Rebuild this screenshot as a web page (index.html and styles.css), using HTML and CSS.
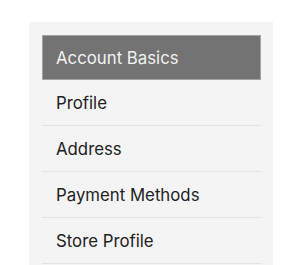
FILE: index.html
```html
<!DOCTYPE html>
<html lang="en">
<head>
  <meta charset="UTF-8" />
  <title>Account</title>
  <link rel="stylesheet" href="styles.css">
</head>
<body>
  <div class="sidebar">
    <nav class="menu">
      <div class="menu-title">Account Basics</div>
      <a class="menu-item" href="#">Profile</a>
      <a class="menu-item" href="#">Address</a>
      <a class="menu-item" href="#">Payment Methods</a>
      <a class="menu-item" href="#">Store Profile</a>
    </nav>
  </div>
</body>
</html>
```

FILE: styles.css
```css
body,
html {
  margin: 0;
  padding: 0;
  background: #fff;
  font-family: Inter, "Liberation Sans", sans-serif;
}

.sidebar {
  margin: 22px 0 0 29px;
  width: 244px;
  height: 243px;
  background: #f4f4f4;
  padding: 13px 12px 0 13px;
  box-sizing: border-box;
}

.menu {
  display: flex;
  flex-direction: column;
}

.menu-title {
  height: 45px;
  box-sizing: border-box;
  display: flex;
  align-items: center;
  padding-left: 13px;
  background: #737373;
  border: 1px solid #a3a3a3;
  color: #f2f2f2;
  font-size: 16.8px;
}

.menu-item {
  height: 46px;
  box-sizing: border-box;
  display: flex;
  align-items: center;
  padding-left: 14px;
  border-bottom: 1px solid #e3e3e3;
  color: #222;
  text-decoration: none;
  font-size: 16.8px;
}
```
